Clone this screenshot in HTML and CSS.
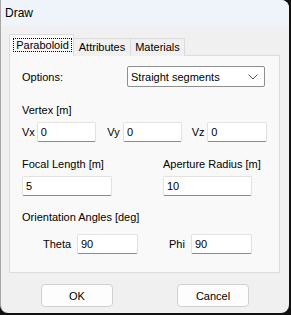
FILE: index.html
```html
<!DOCTYPE html>
<html>

<head>
    <title>Draw</title>
    <meta charset="utf-8">
    <link rel="stylesheet" href="styles.css">
</head>

<body>
    <div class="window">
        <div class="titlebar">Draw</div>

        <div class="dialog">
            <div class="tabs">
                <div class="tab active"><span class="focus">Paraboloid</span></div>
                <div class="tab t-attr">Attributes</div>
                <div class="tab t-mat">Materials</div>
            </div>

            <div class="panel">
                <div class="row options">
                    <span class="opt-label">Options:</span>
                    <div class="select">
                        <span>Straight segments</span>
                        <svg width="10" height="6" viewBox="0 0 10 6">
                            <path d="M0.5 0.5 L5 5 L9.5 0.5" fill="none" stroke="#555" stroke-width="1" />
                        </svg>
                    </div>
                </div>

                <div class="section vertex">Vertex [m]</div>
                <div class="row xyz">
                    <span class="vx">Vx</span>
                    <div class="input w61">0</div>
                    <span class="vy">Vy</span>
                    <div class="input w60">0</div>
                    <span class="vz">Vz</span>
                    <div class="input w61">0</div>
                </div>

                <div class="pair">
                    <div class="col">
                        <div class="section">Focal Length [m]</div>
                        <div class="input w90">5</div>
                    </div>
                    <div class="col">
                        <div class="section">Aperture Radius [m]</div>
                        <div class="input w89">10</div>
                    </div>
                </div>

                <div class="section angles">Orientation Angles [deg]</div>
                <div class="row angle-row">
                    <span class="theta">Theta</span>
                    <div class="input w61">90</div>
                    <span class="phi">Phi</span>
                    <div class="input w61">90</div>
                </div>
            </div>

            <div class="buttons">
                <div class="btn">OK</div>
                <div class="btn">Cancel</div>
            </div>
        </div>
    </div>
</body>

</html>
```

FILE: styles.css
```css
body {
    margin: 0;
    background-color: #111;
    font-family: "Segoe UI", "Liberation Sans", sans-serif;
    font-size: 11px;
    color: #000;
}

.window {
    width: 288px;
    height: 313px;
    background-color: #f0f0f0;
    border-left: 1px solid #a8a8a8;
    border-radius: 0 8px 8px 8px;
    overflow: hidden;
}

.titlebar {
    height: 26px;
    line-height: 27px;
    padding-left: 4px;
    font-size: 12px;
    background-color: #eef4f9;
}

.dialog {
    padding: 8px 0 0 8px;
}

.tabs {
    display: flex;
    align-items: flex-end;
    height: 22px;
    position: relative;
    z-index: 1;
}

.tab {
    height: 18px;
    line-height: 17px;
    text-align: center;
    border: 1px solid #dcdcdc;
    border-bottom: none;
    border-left: none;
    background-color: #f0f0f0;
    box-sizing: border-box;
}

.t-attr {
    width: 57px;
}

.t-mat {
    width: 54px;
}

.tab.active {
    height: 22px;
    width: 65px;
    padding: 3px 0 0 3px;
    border-left: 1px solid #dcdcdc;
    background-color: #f9f9f9;
    line-height: 14px;
}

.focus {
    display: block;
    width: 59px;
    height: 14px;
    border: 1px dotted #000;
    box-sizing: border-box;
    line-height: 12px;
}

.panel {
    width: 271px;
    height: 218px;
    margin-top: -1px;
    border: 1px solid #dcdcdc;
    background-color: #f9f9f9;
    box-sizing: border-box;
    padding: 10px 12px 0 12px;
}

.row {
    display: flex;
    align-items: center;
}

.opt-label {
    width: 105px;
}

.select {
    width: 138px;
    height: 21px;
    border: 1px solid #8f8f8f;
    border-radius: 2px;
    background-color: #fff;
    box-sizing: border-box;
    display: flex;
    align-items: center;
    justify-content: space-between;
    padding: 0 6px 0 3px;
}

.section {
    height: 16px;
    line-height: 16px;
}

.vertex {
    margin-top: 15px;
}

.xyz {
    margin-top: 4px;
}

.input {
    height: 20px;
    line-height: 19px;
    background-color: #fff;
    border: 1px solid #e2e2e2;
    border-bottom: 1px solid #8a8a8a;
    border-radius: 2px;
    box-sizing: border-box;
    padding-left: 3px;
}

.w60 { width: 60px; }
.w61 { width: 61px; }
.w89 { width: 89px; }
.w90 { width: 90px; }

.vx { width: 15px; }
.vy { width: 16px; margin-left: 11px; }
.vz { width: 16px; margin-left: 10px; }

.pair {
    display: flex;
    margin-top: 14px;
}

.pair .col {
    flex: none;
    width: 141px;
}

.pair .col + .col {
    width: 100px;
}

.pair .input {
    margin-top: 4px;
}

.angles {
    margin-top: 13px;
}

.angle-row {
    margin-top: 9px;
}

.theta {
    width: 34px;
    margin-left: 21px;
}

.phi {
    width: 22px;
    margin-left: 31px;
}

.buttons {
    display: flex;
    gap: 64px;
    margin: 11px 0 0 32px;
}

.btn {
    width: 72px;
    height: 23px;
    line-height: 22px;
    text-align: center;
    background-color: #fdfdfd;
    border: 1px solid #d0d0d0;
    border-radius: 4px;
    box-sizing: border-box;
}
```
